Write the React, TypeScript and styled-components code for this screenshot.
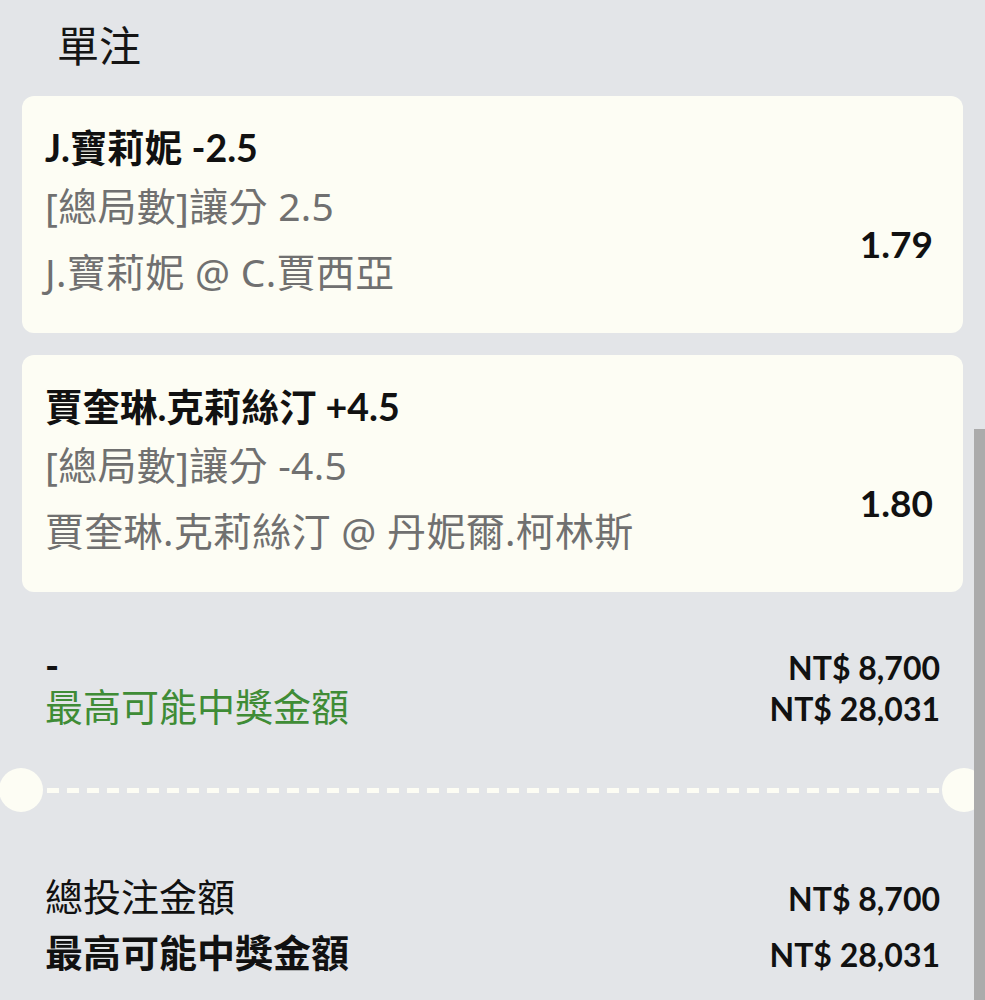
import React from "react";
import styled, { createGlobalStyle } from "styled-components";

const LATIN = `"Lato", "Noto Sans CJK TC", sans-serif`;
const CJK = `"Noto Sans CJK TC", "Noto Sans", sans-serif`;
const MIXED = `"Noto Sans", "Noto Sans CJK TC", sans-serif`;
const CARD = "#fdfdf4";

const Global = createGlobalStyle`
  html, body {
    margin: 0;
    padding: 0;
    background: #e3e5e8;
  }
  body {
    min-height: 100vh;
    overflow: hidden;
    font-family: ${CJK};
    color: #111;
  }
`;

const Page = styled.div`
  padding: 0 22px;
  display: flex;
  flex-direction: column;
`;

const Header = styled.h1`
  margin: 0 0 8px;
  padding-left: 35px;
  font-family: ${CJK};
  font-weight: 400;
  font-size: 42px;
  line-height: 88px;
  color: #151515;
`;

const CardList = styled.div`
  display: flex;
  flex-direction: column;
  gap: 22px;
`;

const Card = styled.div`
  background: ${CARD};
  border-radius: 12px;
  height: 237px;
  box-sizing: border-box;
  padding: 24px 30px 0 23px;
  display: flex;
  justify-content: space-between;
`;

const Info = styled.div`
  display: flex;
  flex-direction: column;
`;

const Selection = styled.div`
  font-family: ${LATIN};
  font-weight: 700;
  font-size: 37.5px;
  line-height: 56px;
  color: #111;
`;

const Detail = styled.div<{ $gap?: number }>`
  font-family: ${MIXED};
  font-weight: 400;
  font-size: 39px;
  letter-spacing: 0.3px;
  line-height: 60px;
  color: #707070;
  margin-top: ${(p) => p.$gap ?? 0}px;
`;

const Odds = styled.div`
  align-self: center;
  margin-top: 34px;
  font-family: ${LATIN};
  font-weight: 700;
  font-size: 37px;
  color: #111;
`;

const Summary = styled.div<{ $top: number }>`
  margin-top: ${(p) => p.$top}px;
  padding: 0 23px;
  display: flex;
  flex-direction: column;
`;

const Row = styled.div<{ $h: number }>`
  height: ${(p) => p.$h}px;
  line-height: ${(p) => p.$h}px;
  display: flex;
  justify-content: space-between;
  align-items: baseline;
`;

const Label = styled.span<{ $tone?: "green" | "dark"; $bold?: boolean; $latin?: boolean }>`
  font-family: ${(p) => (p.$latin ? LATIN : CJK)};
  font-size: 38px;
  font-weight: ${(p) => (p.$bold ? 700 : 400)};
  color: ${(p) => (p.$tone === "green" ? "#3f8c36" : "#111")};
`;

const Amount = styled.span`
  font-family: ${LATIN};
  font-weight: 700;
  font-size: 32px;
  color: #111;
`;

const Divider = styled.div`
  margin: 43px -23px 0;
  height: 44px;
  display: flex;
  align-items: center;
`;

const Dot = styled.span`
  flex: 0 0 44px;
  height: 44px;
  border-radius: 50%;
  background: ${CARD};
`;

const Dashes = styled.span`
  flex: 1;
  height: 5px;
  background: repeating-linear-gradient(
    to right,
    transparent 0 4px,
    ${CARD} 4px 16px,
    transparent 16px 20px
  );
`;

const ScrollThumb = styled.div`
  position: fixed;
  right: 0;
  top: 429px;
  bottom: 0;
  width: 11px;
  background: #ababab;
`;

type Bet = {
  selection: string;
  market: string;
  event: string;
  odds: string;
};

const bets: Bet[] = [
  {
    selection: "J.寶莉妮 -2.5",
    market: "[總局數]讓分 2.5",
    event: "J.寶莉妮 @ C.賈西亞",
    odds: "1.79",
  },
  {
    selection: "賈奎琳.克莉絲汀 +4.5",
    market: "[總局數]讓分 -4.5",
    event: "賈奎琳.克莉絲汀 @ 丹妮爾.柯林斯",
    odds: "1.80",
  },
];

export default function App() {
  return (
    <>
      <Global />
      <Page>
        <Header>單注</Header>
        <CardList>
          {bets.map((b) => (
            <Card key={b.selection}>
              <Info>
                <Selection>{b.selection}</Selection>
                <Detail>{b.market}</Detail>
                <Detail $gap={6}>{b.event}</Detail>
              </Info>
              <Odds>{b.odds}</Odds>
            </Card>
          ))}
        </CardList>

        <Summary $top={53}>
          <Row $h={40}>
            <Label $latin $bold>-</Label>
            <Amount>NT$ 8,700</Amount>
          </Row>
          <Row $h={40}>
            <Label $tone="green">最高可能中獎金額</Label>
            <Amount>NT$ 28,031</Amount>
          </Row>
        </Summary>

        <Divider>
          <Dot />
          <Dashes />
          <Dot />
        </Divider>

        <Summary $top={55}>
          <Row $h={56}>
            <Label>總投注金額</Label>
            <Amount>NT$ 8,700</Amount>
          </Row>
          <Row $h={56}>
            <Label $bold>最高可能中獎金額</Label>
            <Amount>NT$ 28,031</Amount>
          </Row>
        </Summary>
      </Page>
      <ScrollThumb />
    </>
  );
}
